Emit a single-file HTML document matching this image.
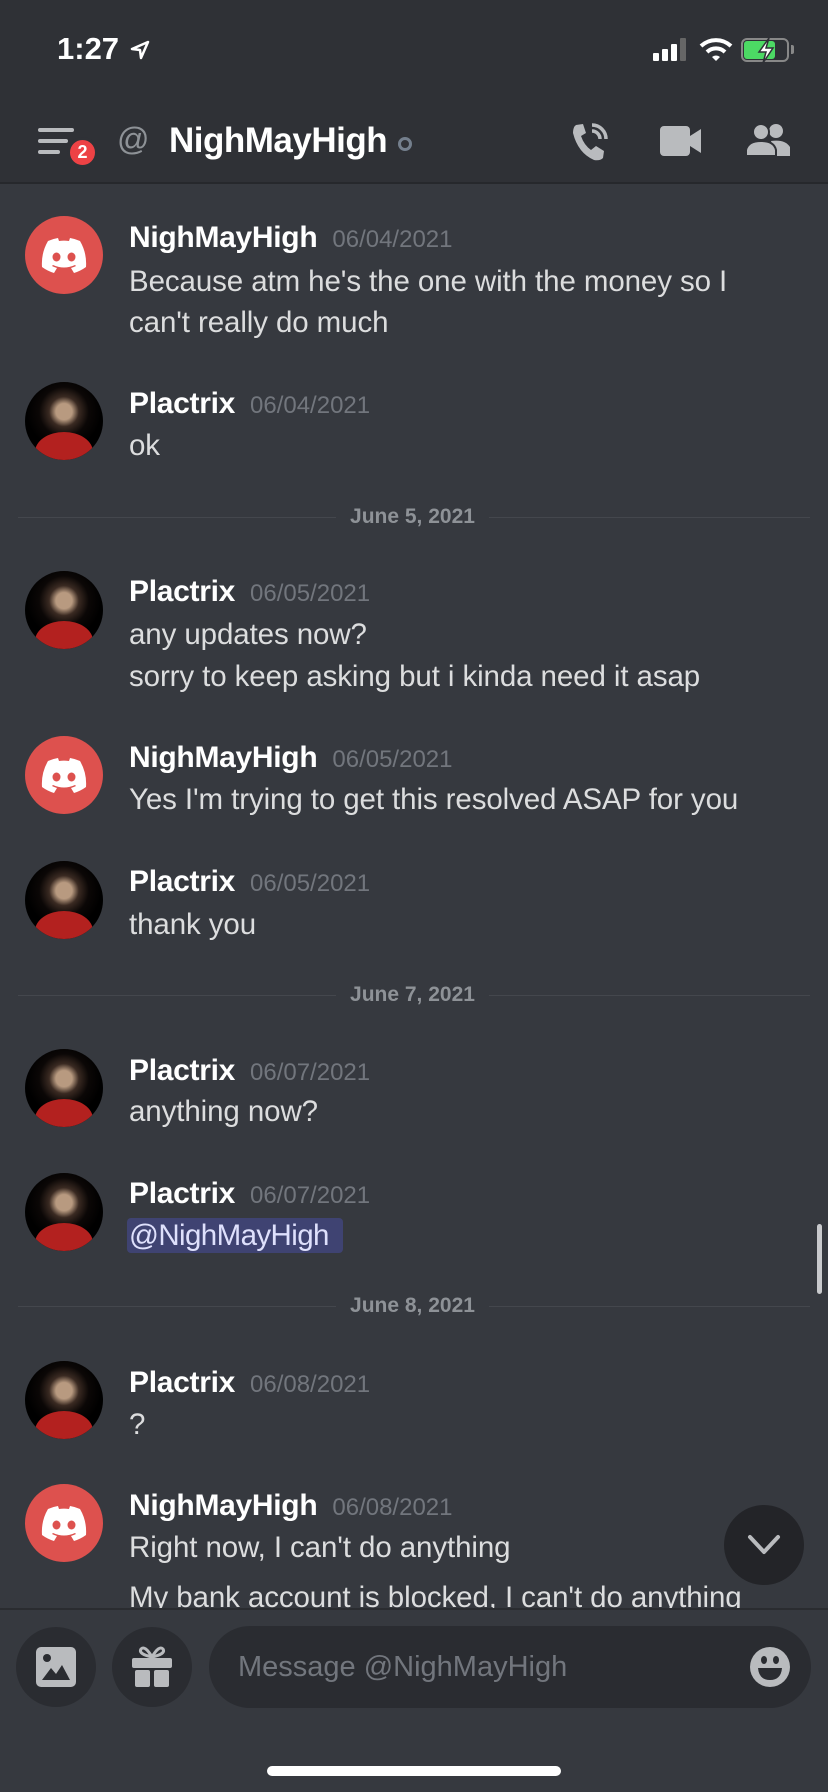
<!DOCTYPE html>
<html><head><meta charset="utf-8"><style>
*{margin:0;padding:0;box-sizing:border-box}
body{width:828px;height:1792px;background:#36393f;font-family:"Liberation Sans",sans-serif;position:relative;overflow:hidden}
.a{position:absolute}
.top{left:0;top:0;width:828px;height:184px;background:#2f3136;border-bottom:2px solid #26282c}
.nm{position:absolute;left:129px;font-size:30px;line-height:30px;font-weight:bold;color:#fff;white-space:nowrap;letter-spacing:-0.3px}
.nm span{font-weight:normal;font-size:24px;color:#72767d;margin-left:15px;letter-spacing:0}
.tx{position:absolute;left:129px;font-size:29.5px;line-height:30px;color:#dcddde;white-space:nowrap;letter-spacing:-0.1px}
.av{position:absolute;left:25px;width:78px;height:78px;border-radius:50%}
.dc{background:#dd514e}
.pl{background:radial-gradient(circle at 50% 38%,#b89a80 0 13%,#3a2a22 24%,#0b0706 40%,#000 60%),#000;overflow:hidden}
.pl:after{content:"";position:absolute;left:10px;top:50px;width:58px;height:40px;border-radius:50% 50% 0 0;background:#b3211f}
.dv{position:absolute;left:18px;width:792px;height:1px;background:#44474d}
.dl{position:absolute;left:336px;width:153px;text-align:center;font-size:21px;font-weight:bold;color:#8e9297;background:#36393f;line-height:24px}
.btn{position:absolute;width:80px;height:80px;border-radius:50%;background:#2a2c31}
</style></head><body>
<div class="a top"></div>
<div class="a" style="left:57px;top:32px;font-size:31px;font-weight:bold;color:#fff;line-height:34px">1:27</div>
<svg class="a" style="left:130px;top:40px" width="20" height="20" viewBox="0 0 20 20"><path d="M18 2 L2 9 L10 10 L11 18 Z" fill="none" stroke="#fff" stroke-width="2.5" stroke-linejoin="round"/></svg>
<div class="a" style="left:653px;top:53px;width:6px;height:8px;background:#fff;border-radius:1px"></div>
<div class="a" style="left:662px;top:49px;width:6px;height:12px;background:#fff;border-radius:1px"></div>
<div class="a" style="left:671px;top:44px;width:6px;height:17px;background:#fff;border-radius:1px"></div>
<div class="a" style="left:680px;top:38px;width:6px;height:23px;background:#666;border-radius:1px"></div>
<svg class="a" style="left:699px;top:37px" width="34" height="26" viewBox="0 0 34 26"><path d="M2 9 A22 22 0 0 1 32 9" stroke="#fff" stroke-width="4" fill="none"/><path d="M8 15 A13 13 0 0 1 26 15" stroke="#fff" stroke-width="4" fill="none"/><path d="M13 20 L17 24 L21 20 A6 6 0 0 0 13 20Z" fill="#fff"/></svg>
<div class="a" style="left:741px;top:38px;width:48px;height:24px;border:2px solid #888;border-radius:6px"></div>
<div class="a" style="left:744px;top:41px;width:31px;height:18px;background:#4cd964;border-radius:3px"></div>
<div class="a" style="left:791px;top:45px;width:3px;height:9px;background:#888;border-radius:0 2px 2px 0"></div>
<svg class="a" style="left:756px;top:37px" width="20" height="27" viewBox="0 0 20 27"><path d="M13 1 L3 15 L10 15 L7 26 L17 11 L10 11 Z" fill="#fff" stroke="#2f3136" stroke-width="1.5"/></svg>
<div class="a" style="left:38px;top:128px;width:36px;height:4px;background:#b9bbbe;border-radius:2px"></div>
<div class="a" style="left:38px;top:139px;width:30px;height:4px;background:#b9bbbe;border-radius:2px"></div>
<div class="a" style="left:38px;top:150px;width:22px;height:4px;background:#b9bbbe;border-radius:2px"></div>
<div class="a" style="left:67px;top:137px;width:31px;height:31px;border-radius:50%;background:#ed4245;border:3px solid #2f3136;color:#fff;font-size:18px;font-weight:bold;text-align:center;line-height:25px">2</div>
<div class="a" style="left:117px;top:122px;font-size:32px;color:#8e9297;line-height:34px">@</div>
<div class="a" style="left:169px;top:122px;font-size:35px;font-weight:bold;color:#fff;line-height:38px;letter-spacing:-0.5px">NighMayHigh</div>
<div class="a" style="left:398px;top:137px;width:14px;height:14px;border-radius:50%;border:3px solid #747f8d"></div>
<svg class="a" style="left:570px;top:121px" width="42" height="40" viewBox="0 0 42 40"><path d="M6 4 L13 3 L16 12 L11 15 Q14 24 21 29 L26 25 L34 30 L33 37 Q30 40 24 39 Q8 32 3 12 Q3 6 6 4Z" fill="#b9bbbe"/><path d="M22 10 A8 8 0 0 1 30 18 M22 4 A14 14 0 0 1 36 18" stroke="#b9bbbe" stroke-width="3.5" fill="none"/></svg>
<svg class="a" style="left:660px;top:126px" width="42" height="30" viewBox="0 0 42 30"><rect x="0" y="0" width="30" height="30" rx="4" fill="#b9bbbe"/><path d="M30 10 L41 3 L41 27 L30 20Z" fill="#b9bbbe"/></svg>
<svg class="a" style="left:745px;top:123px" width="46" height="34" viewBox="0 0 46 34"><circle cx="31" cy="8" r="7" fill="#b9bbbe"/><path d="M26 18 Q40 16 45 24 L45 33 L30 33Z" fill="#b9bbbe"/><circle cx="16" cy="9" r="8" fill="#b9bbbe" stroke="#2f3136" stroke-width="2"/><path d="M1 33 L1 27 Q3 18 16 18 Q29 18 31 27 L31 33Z" fill="#b9bbbe" stroke="#2f3136" stroke-width="2"/></svg>

<div class="av dc" style="top:216px"></div>
<div class="nm" style="top:223px">NighMayHigh<span>06/04/2021</span></div>
<div class="tx" style="top:267px">Because atm he's the one with the money so I</div>
<div class="tx" style="top:308px">can't really do much</div>

<div class="av pl" style="top:382px"></div>
<div class="nm" style="top:389px">Plactrix<span>06/04/2021</span></div>
<div class="tx" style="top:431px">ok</div>

<div class="dv" style="top:517px"></div><div class="dl" style="top:505px">June 5, 2021</div>

<div class="av pl" style="top:571px"></div>
<div class="nm" style="top:577px">Plactrix<span>06/05/2021</span></div>
<div class="tx" style="top:620px">any updates now?</div>
<div class="tx" style="top:662px">sorry to keep asking but i kinda need it asap</div>

<div class="av dc" style="top:736px"></div>
<div class="nm" style="top:743px">NighMayHigh<span>06/05/2021</span></div>
<div class="tx" style="top:785px">Yes I'm trying to get this resolved ASAP for you</div>

<div class="av pl" style="top:861px"></div>
<div class="nm" style="top:867px">Plactrix<span>06/05/2021</span></div>
<div class="tx" style="top:910px">thank you</div>

<div class="dv" style="top:995px"></div><div class="dl" style="top:983px">June 7, 2021</div>

<div class="av pl" style="top:1049px"></div>
<div class="nm" style="top:1056px">Plactrix<span>06/07/2021</span></div>
<div class="tx" style="top:1097px">anything now?</div>

<div class="av pl" style="top:1173px"></div>
<div class="nm" style="top:1179px">Plactrix<span>06/07/2021</span></div>
<div class="a" style="left:127px;top:1218px;width:216px;height:35px;background:#3f4372;border-radius:4px"></div>
<div class="tx" style="top:1221px;color:#dee0fc;letter-spacing:-0.6px">@NighMayHigh</div>
<div class="a" style="left:817px;top:1224px;width:5px;height:70px;background:#c8c9cc;border-radius:3px"></div>

<div class="dv" style="top:1306px"></div><div class="dl" style="top:1294px">June 8, 2021</div>

<div class="av pl" style="top:1361px"></div>
<div class="nm" style="top:1368px">Plactrix<span>06/08/2021</span></div>
<div class="tx" style="top:1410px">?</div>

<div class="av dc" style="top:1484px"></div>
<div class="nm" style="top:1491px">NighMayHigh<span>06/08/2021</span></div>
<div class="tx" style="top:1533px">Right now, I can't do anything</div>
<div class="tx" style="top:1583px">My bank account is blocked, I can't do anything</div>

<svg class="a" style="left:40px;top:238px" width="48" height="36" viewBox="0 0 48 36"><path d="M40 3 A38 38 0 0 0 30 0 L29 3 A35 35 0 0 0 19 3 L18 0 A38 38 0 0 0 8 3 Q1 15 2 29 A40 40 0 0 0 14 35 L17 30 A25 25 0 0 1 12 28 L13 27 Q24 32 35 27 L36 28 A25 25 0 0 1 31 30 L34 35 A40 40 0 0 0 46 29 Q47 15 40 3Z" fill="#fff"/><ellipse cx="16.5" cy="19" rx="4" ry="4.5" fill="#dd514e"/><ellipse cx="31.5" cy="19" rx="4" ry="4.5" fill="#dd514e"/></svg>
<svg class="a" style="left:40px;top:758px" width="48" height="36" viewBox="0 0 48 36"><path d="M40 3 A38 38 0 0 0 30 0 L29 3 A35 35 0 0 0 19 3 L18 0 A38 38 0 0 0 8 3 Q1 15 2 29 A40 40 0 0 0 14 35 L17 30 A25 25 0 0 1 12 28 L13 27 Q24 32 35 27 L36 28 A25 25 0 0 1 31 30 L34 35 A40 40 0 0 0 46 29 Q47 15 40 3Z" fill="#fff"/><ellipse cx="16.5" cy="19" rx="4" ry="4.5" fill="#dd514e"/><ellipse cx="31.5" cy="19" rx="4" ry="4.5" fill="#dd514e"/></svg>
<svg class="a" style="left:40px;top:1506px" width="48" height="36" viewBox="0 0 48 36"><path d="M40 3 A38 38 0 0 0 30 0 L29 3 A35 35 0 0 0 19 3 L18 0 A38 38 0 0 0 8 3 Q1 15 2 29 A40 40 0 0 0 14 35 L17 30 A25 25 0 0 1 12 28 L13 27 Q24 32 35 27 L36 28 A25 25 0 0 1 31 30 L34 35 A40 40 0 0 0 46 29 Q47 15 40 3Z" fill="#fff"/><ellipse cx="16.5" cy="19" rx="4" ry="4.5" fill="#dd514e"/><ellipse cx="31.5" cy="19" rx="4" ry="4.5" fill="#dd514e"/></svg>

<div class="btn" style="left:724px;top:1505px;background:#232428"></div>
<svg class="a" style="left:747px;top:1534px" width="34" height="22" viewBox="0 0 34 22"><path d="M3 3 L17 18 L31 3" stroke="#b9bbbe" stroke-width="4" fill="none" stroke-linecap="round" stroke-linejoin="round"/></svg>

<div class="a" style="left:0;top:1608px;width:828px;height:184px;background:#36393f;border-top:2px solid #2a2c30"></div>
<div class="btn" style="left:16px;top:1627px"></div>
<div class="btn" style="left:112px;top:1627px"></div>
<div class="a" style="left:209px;top:1626px;width:602px;height:82px;border-radius:41px;background:#2a2c31"></div>
<div class="a" style="left:238px;top:1651px;font-size:29px;color:#72767d;line-height:32px">Message @NighMayHigh</div>
<svg class="a" style="left:36px;top:1647px" width="40" height="40" viewBox="0 0 40 40"><rect x="0" y="0" width="40" height="40" rx="5" fill="#b9bbbe"/><circle cx="11" cy="11" r="4" fill="#2a2c31"/><path d="M6 33 L15 21 L20 27 L26 18 L34 33Z" fill="#2a2c31"/></svg>
<svg class="a" style="left:132px;top:1645px" width="40" height="42" viewBox="0 0 40 42"><path d="M20 12 Q13 0 9 4 Q6 9 20 12 Q27 0 31 4 Q34 9 20 12" stroke="#b9bbbe" stroke-width="3" fill="none"/><rect x="0" y="13" width="40" height="10" rx="2" fill="#b9bbbe"/><rect x="3" y="25" width="15" height="17" rx="2" fill="#b9bbbe"/><rect x="22" y="25" width="15" height="17" rx="2" fill="#b9bbbe"/></svg>
<svg class="a" style="left:750px;top:1647px" width="40" height="40" viewBox="0 0 40 40"><circle cx="20" cy="20" r="20" fill="#b9bbbe"/><ellipse cx="14" cy="13" rx="3" ry="4" fill="#2a2c31"/><ellipse cx="26" cy="13" rx="3" ry="4" fill="#2a2c31"/><path d="M8 21 L32 21 Q31 33 20 33 Q9 33 8 21Z" fill="#2a2c31"/></svg>
<div class="a" style="left:267px;top:1766px;width:294px;height:10px;border-radius:5px;background:#fff"></div>
</body></html>
